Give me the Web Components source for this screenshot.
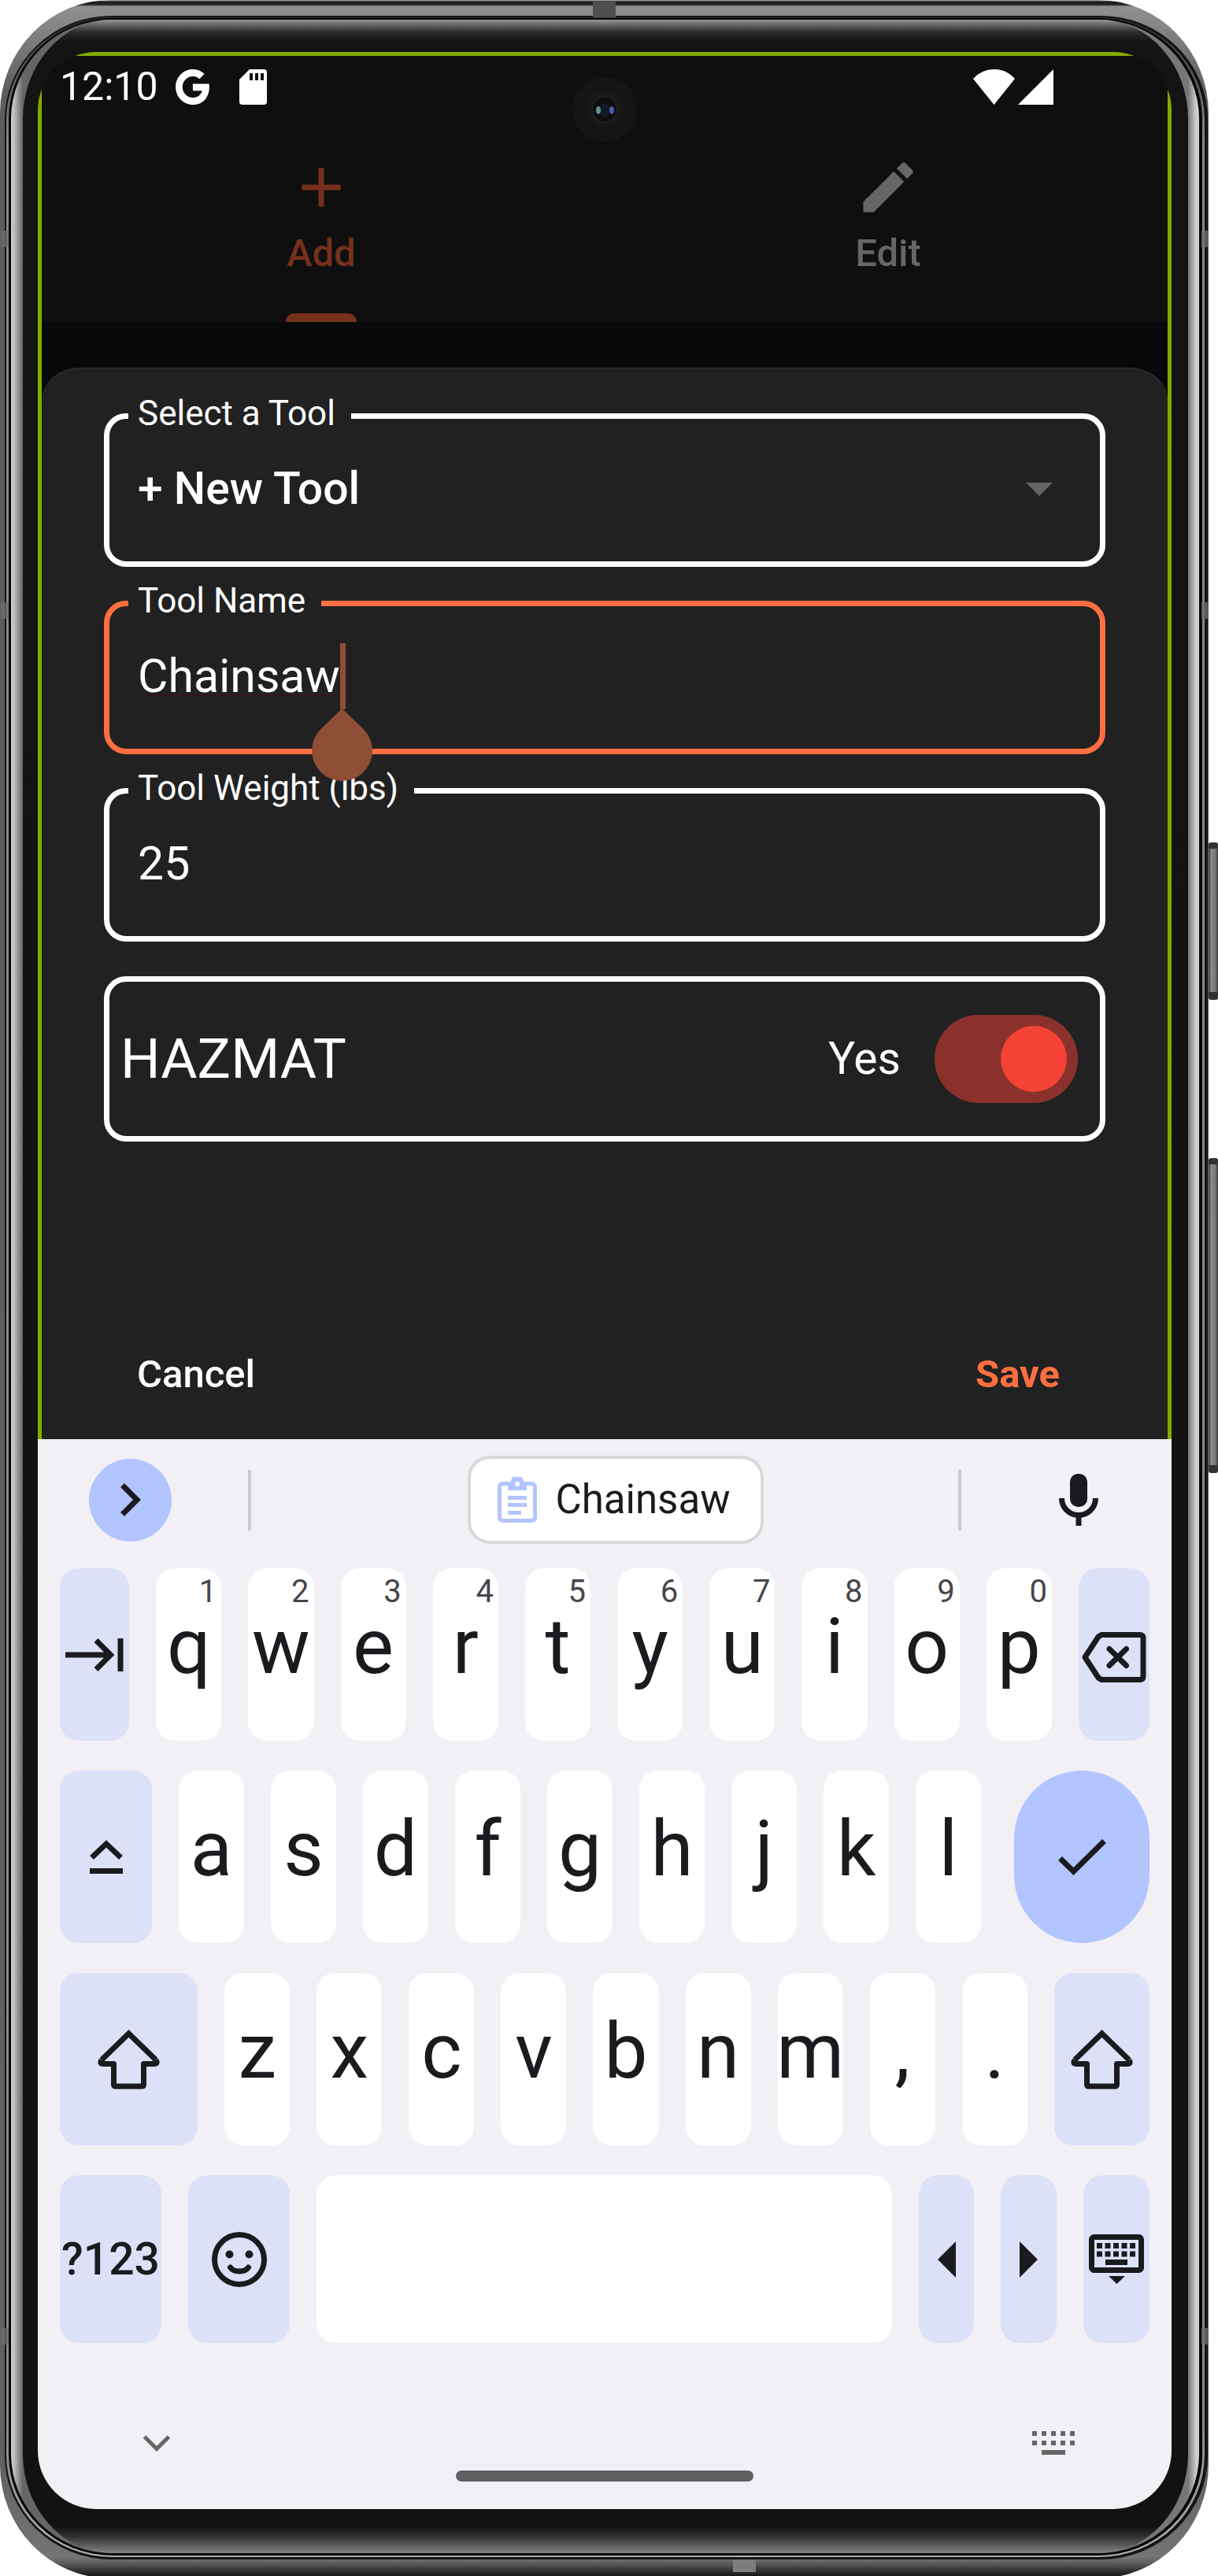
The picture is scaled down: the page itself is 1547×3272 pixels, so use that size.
<!DOCTYPE html>
<html lang="en">
<head>
<meta charset="utf-8">
<title>Add Tool</title>
<style>
  html, body { margin: 0; background: #fff; }
  body { font-family: Roboto, "Liberation Sans", sans-serif; }
</style>
</head>
<body>
<tool-app></tool-app>

<script>
const define = (name, html, setup) => {
  const template = document.createElement('template');
  template.innerHTML = html;
  customElements.define(name, class extends HTMLElement {
    constructor() {
      super();
      this.attachShadow({ mode: 'open' }).append(template.content.cloneNode(true));
    }
    connectedCallback() { if (setup) setup(this, this.shadowRoot); }
  });
};

/* Phone body: metal rim, glass edge and the screen in the middle */
define('phone-frame', `
<style>
  :host { display: block; position: relative; padding-right: 12px; }
  .rim { position: relative; padding: 20px 1px 24px 6px; border-radius: 140px / 144px;
    background: linear-gradient(#c5cbc8 0, #1c1c1c 2px, #242424 6px, #8f8f8f 8px, #8c8c8c 18px, #5c5c5c 120px, #606060 3120px, #747474 3248px, #5c5c5c 3256px, #222 3269px, #111 100%); }
  .line { padding: 2px 4px 3px 2px; border-radius: 136px / 132px; background: #141414; }
  .trim { padding: 1px 3px 2px 3px; border-radius: 134px / 130px; background: linear-gradient(#333 0, #888 160px, #888 3060px, #b0b0b0 100%); }
  .gap { padding: 2px 4px 3px 3px; border-radius: 132px / 128px; background: #060606; }
  .edge { padding: 0 14px 0 15px; border-radius: 128px / 126px;
    background: linear-gradient(90deg, #d0d0d0 0, #bdbdbd 4px, #666 15px, #666 50%, #777 calc(100% - 14px), #cdcdcd calc(100% - 4px), #d6d6d6 100%); }
  .glass { padding: 41px 21px 56px 19px; border-radius: 113px / 126px;
    background: linear-gradient(#9a9a9a 0, #777 4px, #2a2a2a 16px, #141414 28px, #121212 calc(100% - 34px), #333 calc(100% - 20px), #858585 100%); }
  .screen { position: relative; border-radius: 74px; overflow: hidden; background: #0f0f0f; }
  .band { position: absolute; background: #6c6c6c; }
  .side { width: 10px; height: 21px; opacity: .8; }
  .l { left: 1px; } .r { right: 13px; width: 8px; }
  .b1 { top: 293px; } .b2 { top: 765px; } .b3 { top: 2957px; }
  .top { top: 2px; left: 48.700%; width: 29px; height: 20px; background: #4f4f4f; }
  .bot { bottom: 8px; left: 60.200%; width: 29px; height: 16px; background: #7e7e7e; }
  .btn { position: absolute; right: 0; width: 12px; box-sizing: border-box; border-radius: 3px;
    background: linear-gradient(90deg, #444, #8a8a8a 30%, #777 75%, #333); border: solid #333; border-width: 8px 0 10px; }
  .power { top: 1070px; height: 200px; } .vol { top: 1471px; height: 400px; }
</style>
<div class="btn power"></div><div class="btn vol"></div>
<div class="rim"><div class="line"><div class="trim"><div class="gap"><div class="edge"><div class="glass">
  <div class="screen"><slot></slot></div>
</div></div></div></div></div></div>
<div class="band top"></div><div class="band bot"></div>
<div class="band side l b1"></div><div class="band side l b2"></div><div class="band side l b3"></div>
<div class="band side r b1"></div><div class="band side r b2"></div><div class="band side r b3"></div>
`);

define('camera-hole', `
<style>:host { display: block; position: absolute; top: 32px; left: calc(50% - 41px); width: 82px; height: 82px; } svg { display: block; }</style>
<svg width="82" height="82" viewBox="0 0 82 82" aria-hidden="true">
  <circle cx="41" cy="41" r="41" fill="#151515"/><circle cx="41" cy="41" r="25" fill="#181818"/>
  <circle cx="41" cy="41" r="18" fill="#1d1d1d"/><circle cx="41" cy="41" r="15" fill="#0c0e10"/>
  <ellipse cx="41" cy="42" rx="7" ry="9" fill="#141b24"/>
  <ellipse cx="33" cy="42" rx="3" ry="5" fill="#5f9298"/><ellipse cx="50" cy="42" rx="3" ry="5" fill="#4a5cb0"/>
</svg>`);

define('status-bar', `
<style>
  :host { display: flex; align-items: center; height: 78px; padding: 0 145px 0 23px; color: #fff; font-size: 50px; line-height: 60px; }
  .g { margin-left: 22px; } .sd { margin-left: 38px; } .wifi { margin-left: auto; margin-right: 4px; }
  svg { display: block; flex: none; }
</style>
<time>12:10</time>
<svg class="g" width="43" height="45" viewBox="2.5 2 19.7 20" preserveAspectRatio="none" fill="#fff" role="img" aria-label="Google"><path d="M12.545 10.239v3.821h5.445c-.712 2.315-2.647 3.972-5.445 3.972-3.332 0-6.033-2.701-6.033-6.032s2.701-6.032 6.033-6.032c1.498 0 2.866.549 3.921 1.453l2.814-2.814C17.503 2.988 15.139 2 12.545 2 7.021 2 2.543 6.477 2.543 12s4.478 10 10.002 10c8.396 0 10.249-7.85 9.426-11.748z"/></svg>
<svg class="sd" width="35" height="45" viewBox="0 0 35 45" role="img" aria-label="SD card"><path fill="#fff" d="M13 0h18q4 0 4 4v37q0 4-4 4H4q-4 0-4-4V13z"/><path fill="#0f0f0f" d="M13 5h4v9h-4zM20 5h4v9h-4zM27 5h4v9h-4z"/></svg>
<svg class="wifi" width="53" height="45" viewBox="0 0 53 45" fill="#fff" role="img" aria-label="Wi-Fi"><path d="M0 12Q11 0 26.500 0T53 12L26.500 45z"/></svg>
<svg width="45" height="45" viewBox="0 0 45 45" fill="#fff" role="img" aria-label="Signal"><path d="M45 0v45H0z"/></svg>
`);

define('tab-item', `
<style>
  :host { display: flex; flex: 1; color: #666; }
  :host([active]) { color: #76301c; }
  button { flex: 1; display: flex; flex-direction: column; align-items: center; border: 0; padding: 47px 0 0; background: none; color: inherit; font: 500 49px/60px Roboto, sans-serif; }
  .icon { height: 84px; margin-bottom: 12px; }
  .bar { width: 90px; height: 11px; margin-top: 46px; border-radius: 10px 10px 0 0; }
  :host([active]) .bar { background: currentColor; }
</style>
<button type="button" role="tab"><span class="icon"><slot name="icon"></slot></span><slot></slot><span class="bar"></span></button>
`, (host, root) => root.querySelector('button').setAttribute('aria-selected', host.hasAttribute('active')));

/* Outlined field: the label sits in the gap of the border */
define('outlined-field', `
<style>
  :host { display: block; color: #fff; }
  fieldset { margin: 0; padding: 0; min-width: 0; height: 217px; box-sizing: border-box; border: 7px solid #fff; border-radius: 28px; }
  :host([focused]) fieldset { border-color: #ff6e40; }
  :host([focused]) { position: relative; z-index: 1; }
  legend { margin-left: 24px; padding: 0 20px 0 12px; font-size: 44px; line-height: 45px; height: 50px; }
  .body { display: flex; align-items: center; height: 136px; padding: 0 60px 0 36px; }
  select, input { appearance: none; border: 0; padding: 0; margin: 0; outline: 0; background: none; color: inherit; font: 400 59px/80px Roboto, sans-serif; flex: 1; min-width: 0; }
  select { font-weight: 500; font-size: 57px; opacity: 1; }
  :host([focused]) input { flex: none; field-sizing: content; caret-color: transparent; background: linear-gradient(#2b1a1a, #2b1a1a) 0 63px / 100% 3px no-repeat; }
  .caret { position: relative; width: 7px; height: 84px; background: #904e37; }
  .caret svg { position: absolute; left: -36px; top: 83px; }
  svg { display: block; flex: none; }
</style>
<fieldset><legend><label for="c"></label></legend><div class="body"></div></fieldset>
`, (host, root) => {
  root.querySelector('label').textContent = host.getAttribute('label');
  const body = root.querySelector('.body');
  const value = host.getAttribute('value');
  if (host.hasAttribute('menu')) {
    body.innerHTML = '<select id="c"><option></option></select><svg width="34" height="17" viewBox="0 0 34 17" fill="#646464" aria-hidden="true"><path d="M0 0h34L17 17z"/></svg>';
    body.querySelector('option').textContent = value;
  } else {
    body.innerHTML = '<input id="c" type="text" spellcheck="false">' + (host.hasAttribute('focused')
      ? '<span class="caret"><svg width="77" height="92" viewBox="0 0 77 92" fill="#904e37" aria-hidden="true"><path d="M38.500 0 66 26.500A38.500 38.500 0 1 1 11 26.500z"/></svg></span>' : '');
    body.querySelector('input').setAttribute('value', value);
  }
});

define('switch-field', `
<style>
  :host { display: flex; align-items: center; box-sizing: border-box; height: 210px; border: 7px solid #fff; border-radius: 28px; padding: 0 28px 0 14px; color: #fff; }
  label { flex: 1; font-size: 71px; line-height: 84px; }
  output { font-size: 57px; line-height: 70px; margin-right: 43px; }
  input { appearance: none; margin: 0; box-sizing: border-box; width: 182px; height: 112px; padding: 14px; border-radius: 56px; background: #8a312b; display: flex; justify-content: flex-end; }
  input::before { content: ""; width: 84px; height: 84px; border-radius: 50%; background: #f44336; }
</style>
<label for="s"><slot></slot></label><output for="s">Yes</output><input id="s" type="checkbox" role="switch" checked>
`);

define('text-button', `
<style>
  :host { display: block; color: #fff; }
  button { border: 0; background: none; color: inherit; padding: 12px 0; font: 500 49px/60px Roboto, sans-serif; }
  :host([primary]) button { color: #ff6e40; font-weight: 700; }
</style>
<button type="button"><slot></slot></button>`);

define('tool-sheet', `
<style>
  :host { display: flex; flex-direction: column; gap: 21px; background: #212121; border-radius: 49px 49px 0 0 / 42px 42px 0 0; padding: 36px 79px 40px; box-shadow: inset 0 1px 0 #333; }
  switch-field { margin-top: 23px; }
  .actions { display: flex; justify-content: space-between; margin-top: 233px; padding: 0 58px 0 42px; }
</style>
<outlined-field label="Select a Tool" value="+ New Tool" menu></outlined-field>
<outlined-field label="Tool Name" value="Chainsaw" focused></outlined-field>
<outlined-field label="Tool Weight (lbs)" value="25"></outlined-field>
<switch-field>HAZMAT</switch-field>
<div class="actions"><text-button>Cancel</text-button><text-button primary>Save</text-button></div>
`);

define('key-cap', `
<style>
  :host { display: flex; flex: var(--w, 83) 1 0px; min-width: 0; }
  button { position: relative; flex: 1; min-width: 0; height: 219px; display: flex; align-items: center; justify-content: center; border: 0; border-radius: 24px; padding: 0 0 20px; background: #fff; color: #1b1b1f; font: 400 98px/120px Roboto, sans-serif; }
  :host([action]) button { background: #dce1f8; padding: 0; }
  :host([short]) button { height: 213px; }
  :host([text]) button { font: 500 57px/70px Roboto, sans-serif; }
  :host([enter]) { margin-left: 8px; }
  :host([enter]) button { background: #b2c5ff; border-radius: 86px; }
  small { position: absolute; top: 10px; right: 6px; font-size: 40px; line-height: 40px; color: #46464a; }
  small:empty { display: none; }
</style>
<button type="button"><slot></slot><small></small></button>
`, (host, root) => {
  root.querySelector('small').textContent = host.getAttribute('hint') || '';
  if (host.hasAttribute('name')) root.querySelector('button').setAttribute('aria-label', host.getAttribute('name'));
});

define('suggestion-strip', `
<style>
  :host { display: flex; align-items: center; height: 154px; padding: 0 93px 0 65px; }
  button { border: 0; padding: 0; background: none; display: flex; align-items: center; justify-content: center; }
  .more { width: 105px; height: 105px; border-radius: 50%; background: #b2c5ff; }
  i { width: 4px; height: 77px; background: #cac9ce; } .first { margin-left: 97px; } .last { margin-right: 124px; }
  .mid { flex: 1; display: flex; justify-content: center; padding-left: 28px; }
  .chip { box-sizing: border-box; height: 112px; padding: 0 39px 0 34px; gap: 24px; border: 4px solid #d8d8da; border-radius: 28px; background: #fff; color: #1b1b1f; font: 400 51px/60px Roboto, sans-serif; }
  svg { display: block; flex: none; }
</style>
<button class="more" type="button" aria-label="More"><svg width="26" height="42" viewBox="0 0 26 42" fill="none" stroke="#1b1b1f" stroke-width="7"><path d="M2.500 2.500 21 21 2.500 39.500"/></svg></button>
<i class="first"></i>
<div class="mid"><button class="chip" type="button">
  <svg width="50" height="58" viewBox="0 0 50 58" aria-hidden="true"><rect x="2.500" y="8.500" width="45" height="47" rx="4" fill="none" stroke="#b2c5ff" stroke-width="5"/><path fill="#b2c5ff" d="M13 6h4a8 8 0 0 1 16 0h4v11H13zM13 24h24v5H13zM13 33h24v5H13zM13 43h17v5H13z"/><circle cx="25" cy="9" r="3" fill="#fff"/></svg>
  Chainsaw</button></div>
<i class="last"></i>
<button type="button" aria-label="Voice input"><svg width="50" height="66" viewBox="0 0 50 66" fill="#1b1b1f"><rect x="14" width="22" height="42" rx="10"/><path d="M3.500 31a21.500 21.500 0 0 0 43 0" fill="none" stroke="#1b1b1f" stroke-width="7"/><path d="M21.500 52h7v14h-7z"/></svg></button>
`);

define('soft-keyboard', `
<style>
  :host { display: flow-root; background: #f2f0f5; padding-bottom: 35px; }
  .rows { display: flex; flex-direction: column; gap: 38px; padding: 10px 28px 97px; }
  .row { display: flex; gap: 34px; }
  .nav { display: flex; justify-content: space-between; align-items: center; height: 60px; padding: 0 123px 0 134px; }
  .nav button { border: 0; padding: 0; background: none; }
  .pill { width: 378px; height: 14px; margin: 5px auto 0; border-radius: 7px; background: #606062; }
  svg { display: block; flex: none; overflow: visible; }
</style>
<suggestion-strip></suggestion-strip>
<div class="rows"></div>
<div class="nav">
  <button type="button" aria-label="Hide keyboard"><svg width="34" height="21" viewBox="0 0 34 21" fill="none" stroke="#666" stroke-width="5"><path d="M1.500 2 17 17.500 32.500 2"/></svg></button>
  <button type="button" aria-label="Switch keyboard"><svg width="54" height="30" viewBox="0 0 54 30" fill="#666"><path d="M0 0h6v6H0zM12 0h6v6h-6zM24 0h6v6h-6zM36 0h6v6h-6zM48 0h6v6h-6zM0 12h6v6H0zM12 12h6v6h-6zM24 12h6v6h-6zM36 12h6v6h-6zM48 12h6v6h-6zM12 24h30v6H12z"/></svg></button>
</div>
<div class="pill"></div>
`, (host, root) => {
  const ink = '#1b1b1f';
  const shift = `<svg width="79" height="76" viewBox="0 0 79 76" fill="none" stroke="${ink}" stroke-width="7" stroke-linejoin="round"><path stroke-linejoin="miter" d="M5 38.500 39.500 5 74 38.500"/><path d="M5 38.500Q2 43.500 7 43.500H20.500V69.500Q20.500 72 23 72H56Q58.500 72 58.500 69.500V43.500H72Q77 43.500 74 38.500"/></svg>`;
  const dots = [0, 1, 2, 3, 4].map(i => `M${10 + i * 10.5} 11h7v7h-7zM${10 + i * 10.5} 21.500h7v7h-7z`).join('');
  const icons = {
    tab: `<svg width="74" height="42" viewBox="0 0 74 42" fill="none" stroke="${ink}" stroke-width="7"><path d="M0 21H57M39 2.500 57.500 21 39 39.500M70 0v42"/></svg>`,
    del: `<svg width="82" height="64" viewBox="0 -3 82 64" fill="none" stroke="${ink}" stroke-width="7" stroke-linejoin="round" stroke-linecap="round"><path d="M25 3.500H73.500Q78 3.500 78 8V56Q78 60.500 73.500 60.500H25L21 58 4 32 21 6z"/><path d="M35 21.500 56.500 42.500M56.500 21.500 35 42.500"/></svg>`,
    caps: `<svg width="42" height="43" viewBox="0 0 42 43" fill="none" stroke="${ink}" stroke-width="7"><path d="M2.500 22.500 21 5 39.500 22.500M0 39.500h42"/></svg>`,
    check: `<svg width="61" height="46" viewBox="0 0 61 46" fill="none" stroke="${ink}" stroke-width="7"><path d="M2.500 24.500 19.500 41 58.500 2.500"/></svg>`,
    smile: `<svg width="70" height="70" viewBox="0 0 70 70" fill="none" stroke="${ink}" stroke-width="7"><circle cx="35" cy="35" r="31.500"/><path stroke-linecap="round" d="M23.500 45Q27 50 35 50T46.500 45"/><circle cx="22.500" cy="28.500" r="5" fill="${ink}" stroke="none"/><circle cx="47.500" cy="28.500" r="5" fill="${ink}" stroke="none"/></svg>`,
    left: `<svg width="23" height="46" viewBox="0 0 23 46" fill="${ink}"><path d="M23 0v46L0 23z"/></svg>`,
    right: `<svg width="23" height="46" viewBox="0 0 23 46" fill="${ink}"><path d="M0 0v46l23-23z"/></svg>`,
    board: `<svg width="70" height="63" viewBox="0 0 70 63" fill="${ink}"><rect x="3.500" y="3.500" width="63" height="42" rx="3" fill="none" stroke="${ink}" stroke-width="7"/><path d="${dots}M21 32h28v7H21zM25 53h21L35.500 63z"/></svg>`,
    shift
  };
  const act = (w, name, icon, more = '') => `<key-cap action ${more} name="${name}" style="--w:${w}">${icons[icon]}</key-cap>`;
  const letters = (text, hints = '') => [...text].map((c, i) => `<key-cap hint="${hints[i] || ''}">${c}</key-cap>`).join('');
  root.querySelector('.rows').innerHTML = [
    act(88, 'Tab', 'tab') + letters('qwertyuiop', '1234567890') + act(90, 'Backspace', 'del'),
    act(117, 'Caps', 'caps') + letters('asdfghjkl') + act(172, 'Done', 'check', 'enter'),
    act(175, 'Shift', 'shift') + letters('zxcvbnm,.') + act(121, 'Shift', 'shift'),
    `<key-cap action short text style="--w:129">?123</key-cap>` + act(129, 'Emoji', 'smile', 'short') +
      `<key-cap short name="Space" style="--w:731"></key-cap>` + act(70, 'Left', 'left', 'short') +
      act(71, 'Right', 'right', 'short') + act(84, 'Keyboards', 'board', 'short')
  ].map(r => `<div class="row">${r}</div>`).join('');
});

define('tool-app', `
<style>
  :host { display: block; }
  .app { border: solid #84ab00; border-width: 5px 5px 0; background: #07080a; }
  .head { background: #0f0f0f; margin-bottom: 58px; }
  .tabs { display: flex; margin: 0 -5px; }
  svg { display: block; }
</style>
<phone-frame>
  <div class="app">
    <div class="head">
      <status-bar></status-bar>
      <div class="tabs" role="tablist">
        <tab-item active><svg slot="icon" width="84" height="84" viewBox="0 0 24 24" fill="currentColor"><path d="M19 13h-6v6h-2v-6H5v-2h6V5h2v6h6v2z"/></svg>Add</tab-item>
        <tab-item><svg slot="icon" width="84" height="84" viewBox="0 0 24 24" fill="currentColor"><path d="M3 17.250V21h3.750L17.810 9.940l-3.750-3.750L3 17.250zM20.710 7.040a.996.996 0 0 0 0-1.410l-2.340-2.340a.996.996 0 0 0-1.410 0l-1.830 1.830 3.750 3.750 1.830-1.830z"/></svg>Edit</tab-item>
      </div>
    </div>
    <tool-sheet></tool-sheet>
  </div>
  <soft-keyboard></soft-keyboard>
  <camera-hole></camera-hole>
</phone-frame>
`);
</script>
</body>
</html>
